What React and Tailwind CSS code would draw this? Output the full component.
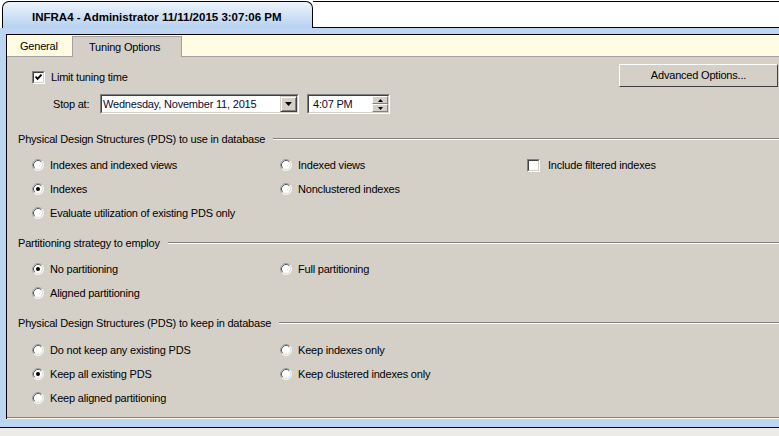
import React from 'react';

function CheckBox({ checked }) {
    return (
        <span className="flex w-[13px] h-[13px] shrink-0 border border-t-[#808080] border-l-[#808080] border-b-white border-r-white">
            <span className="flex flex-1 items-center justify-center bg-white border border-t-[#404040] border-l-[#404040] border-b-[#d4d0c8] border-r-[#d4d0c8]">
                {checked && (
                    <svg width="7" height="7" viewBox="0 0 7 7">
                        <path d="M0.5 2.5 L2.5 4.8 L6.5 0.6" fill="none" stroke="#000" strokeWidth="1.8" />
                    </svg>
                )}
            </span>
        </span>
    );
}

function Radio({ checked }) {
    return (
        <svg width="12" height="12" viewBox="0 0 12 12" className="shrink-0">
            <circle cx="6" cy="6" r="5.5" fill="#fff" />
            <path d="M2.11 9.89 A5.5 5.5 0 0 1 9.89 2.11" fill="none" stroke="#9a9a9a" />
            <path d="M9.89 2.11 A5.5 5.5 0 0 1 2.11 9.89" fill="none" stroke="#f4f4f4" />
            <path d="M2.82 9.18 A4.5 4.5 0 0 1 9.18 2.82" fill="none" stroke="#5a5a5a" />
            <path d="M9.18 2.82 A4.5 4.5 0 0 1 2.82 9.18" fill="none" stroke="#dcdad4" />
            {checked && <circle cx="6" cy="6" r="2" fill="#000" />}
        </svg>
    );
}

function Option({ label, checked, box }) {
    return (
        <div className="flex items-center">
            {box ? <CheckBox checked={checked} /> : <Radio checked={checked} />}
            <span className={box ? 'ml-[8px]' : 'ml-[6px]'}>{label}</span>
        </div>
    );
}

function SectionHeader({ title }) {
    return (
        <div className="flex items-center h-[14px] pl-[11px]">
            <span className="whitespace-nowrap">{title}</span>
            <div className="flex-1 ml-[8px] h-[2px] border-t border-t-[#808080] border-b border-b-white" />
        </div>
    );
}

function OptionGrid({ rows }) {
    return (
        <div className="grid grid-cols-[248px_247px_1fr] pl-[25px] auto-rows-[24px] items-center">
            {rows.flat().map((o, i) => (
                <div key={i}>{o && <Option {...o} />}</div>
            ))}
        </div>
    );
}

const pdsUse = [
    [{ label: 'Indexes and indexed views' }, { label: 'Indexed views' }, { label: 'Include filtered indexes', box: true }],
    [{ label: 'Indexes', checked: true }, { label: 'Nonclustered indexes' }, null],
    [{ label: 'Evaluate utilization of existing PDS only' }, null, null],
];

const partitioning = [
    [{ label: 'No partitioning', checked: true }, { label: 'Full partitioning' }, null],
    [{ label: 'Aligned partitioning' }, null, null],
];

const pdsKeep = [
    [{ label: 'Do not keep any existing PDS' }, { label: 'Keep indexes only' }, null],
    [{ label: 'Keep all existing PDS', checked: true }, { label: 'Keep clustered indexes only' }, null],
    [{ label: 'Keep aligned partitioning' }, null, null],
];

export default function App() {
    return (
        <div className="w-[779px] h-[436px] overflow-hidden bg-white flex flex-col text-[11px] tracking-[-0.2px] text-black font-['Liberation_Sans',Arial,sans-serif]">
            {/* document tab */}
            <div className="flex h-[28px] pt-[1px] shrink-0">
                <div className="ml-[2px] w-[311px] h-[27px] rounded-t-[7px] border border-b-0 border-black bg-gradient-to-b from-[#eef4fb] to-[#b6d1f0] pl-[29px] pt-[7px] font-bold text-[11.5px] tracking-[0px]">
                    INFRA4 - Administrator 11/11/2015 3:07:06 PM
                </div>
                <div className="flex-1 h-[27px] border-t border-b border-black" />
            </div>

            {/* body */}
            <div className="flex flex-col h-[400px] shrink-0 bg-[#bcd5f2] pl-[6px] pt-[6px] border-b border-black">
                <div className="flex flex-col h-[385px] border-l border-t border-black bg-[#fefde3]">
                    {/* tab strip */}
                    <div className="flex items-end h-[22px] border-b border-[#a0a0a0]">
                        <div className="w-[65px] h-[20px] pl-[13px] flex items-center">General</div>
                        <div className="w-[110px] h-[21px] mb-[-1px] pl-[16px] flex items-center bg-[#d4d0c8] border border-b-0 border-[#a0a0a0]">
                            Tuning Options
                        </div>
                    </div>

                    {/* content */}
                    <div className="flex flex-col h-[361px] bg-[#d4d0c8] border-b border-[#808080]">
                        <div className="flex justify-between items-start pt-[7px]">
                            <div className="mt-[5px] ml-[25px] flex items-center">
                                <CheckBox checked />
                                <span className="ml-[6px]">Limit tuning time</span>
                            </div>
                            <button className="w-[159px] h-[23px] mr-[1px] border border-t-white border-l-white border-b-[#404040] border-r-[#404040] bg-[#d4d0c8] flex items-center justify-center">
                                Advanced Options...
                            </button>
                        </div>

                        <div className="flex items-center h-[20px] mt-[7px] pl-[46px]">
                            <span className="w-[47px]">Stop at:</span>
                            <div className="w-[199px] h-[20px] flex border border-t-[#808080] border-l-[#808080] border-b-white border-r-white">
                                <div className="flex flex-1 items-center bg-white border border-t-[#404040] border-l-[#404040] border-b-[#d4d0c8] border-r-[#d4d0c8]">
                                    <span className="flex-1 pl-[1px] text-[#0a0a30]">Wednesday, November 11, 2015</span>
                                    <div className="w-[17px] h-[16px] flex items-center justify-center bg-[#d4d0c8] border border-t-[#d4d0c8] border-l-[#d4d0c8] border-b-[#404040] border-r-[#404040] shadow-[inset_1px_1px_0_#fff,inset_-1px_-1px_0_#808080]">
                                        <svg width="7" height="4" viewBox="0 0 7 4"><path d="M0 0 H7 L3.5 4 Z" fill="#000" /></svg>
                                    </div>
                                </div>
                            </div>
                            <div className="ml-[8px] w-[83px] h-[20px] flex border border-t-[#808080] border-l-[#808080] border-b-white border-r-white">
                                <div className="flex flex-1 items-center bg-white border border-t-[#404040] border-l-[#404040] border-b-[#d4d0c8] border-r-[#d4d0c8]">
                                    <span className="flex-1 pl-[4px] text-[#0a0a30]">4:07 PM</span>
                                    <div className="w-[16px] h-[16px] flex flex-col">
                                        <div className="flex-1 flex items-center justify-center bg-[#d4d0c8] border border-t-white border-l-white border-b-[#808080] border-r-[#808080]">
                                            <svg width="5" height="3" viewBox="0 0 5 3"><path d="M0 3 H5 L2.5 0 Z" fill="#000" /></svg>
                                        </div>
                                        <div className="flex-1 flex items-center justify-center bg-[#d4d0c8] border border-t-white border-l-white border-b-[#808080] border-r-[#808080]">
                                            <svg width="5" height="3" viewBox="0 0 5 3"><path d="M0 0 H5 L2.5 3 Z" fill="#000" /></svg>
                                        </div>
                                    </div>
                                </div>
                            </div>
                        </div>

                        <div className="mt-[18px]">
                            <SectionHeader title="Physical Design Structures (PDS) to use in database" />
                        </div>
                        <div className="mt-[7px]">
                            <OptionGrid rows={pdsUse} />
                        </div>

                        <div className="mt-[11px]">
                            <SectionHeader title="Partitioning strategy to employ" />
                        </div>
                        <div className="mt-[7px]">
                            <OptionGrid rows={partitioning} />
                        </div>

                        <div className="mt-[11px]">
                            <SectionHeader title="Physical Design Structures (PDS) to keep in database" />
                        </div>
                        <div className="mt-[8px]">
                            <OptionGrid rows={pdsKeep} />
                        </div>
                    </div>
                </div>
            </div>

            <div className="flex-1 bg-[#ecebe7]" />
        </div>
    );
}
